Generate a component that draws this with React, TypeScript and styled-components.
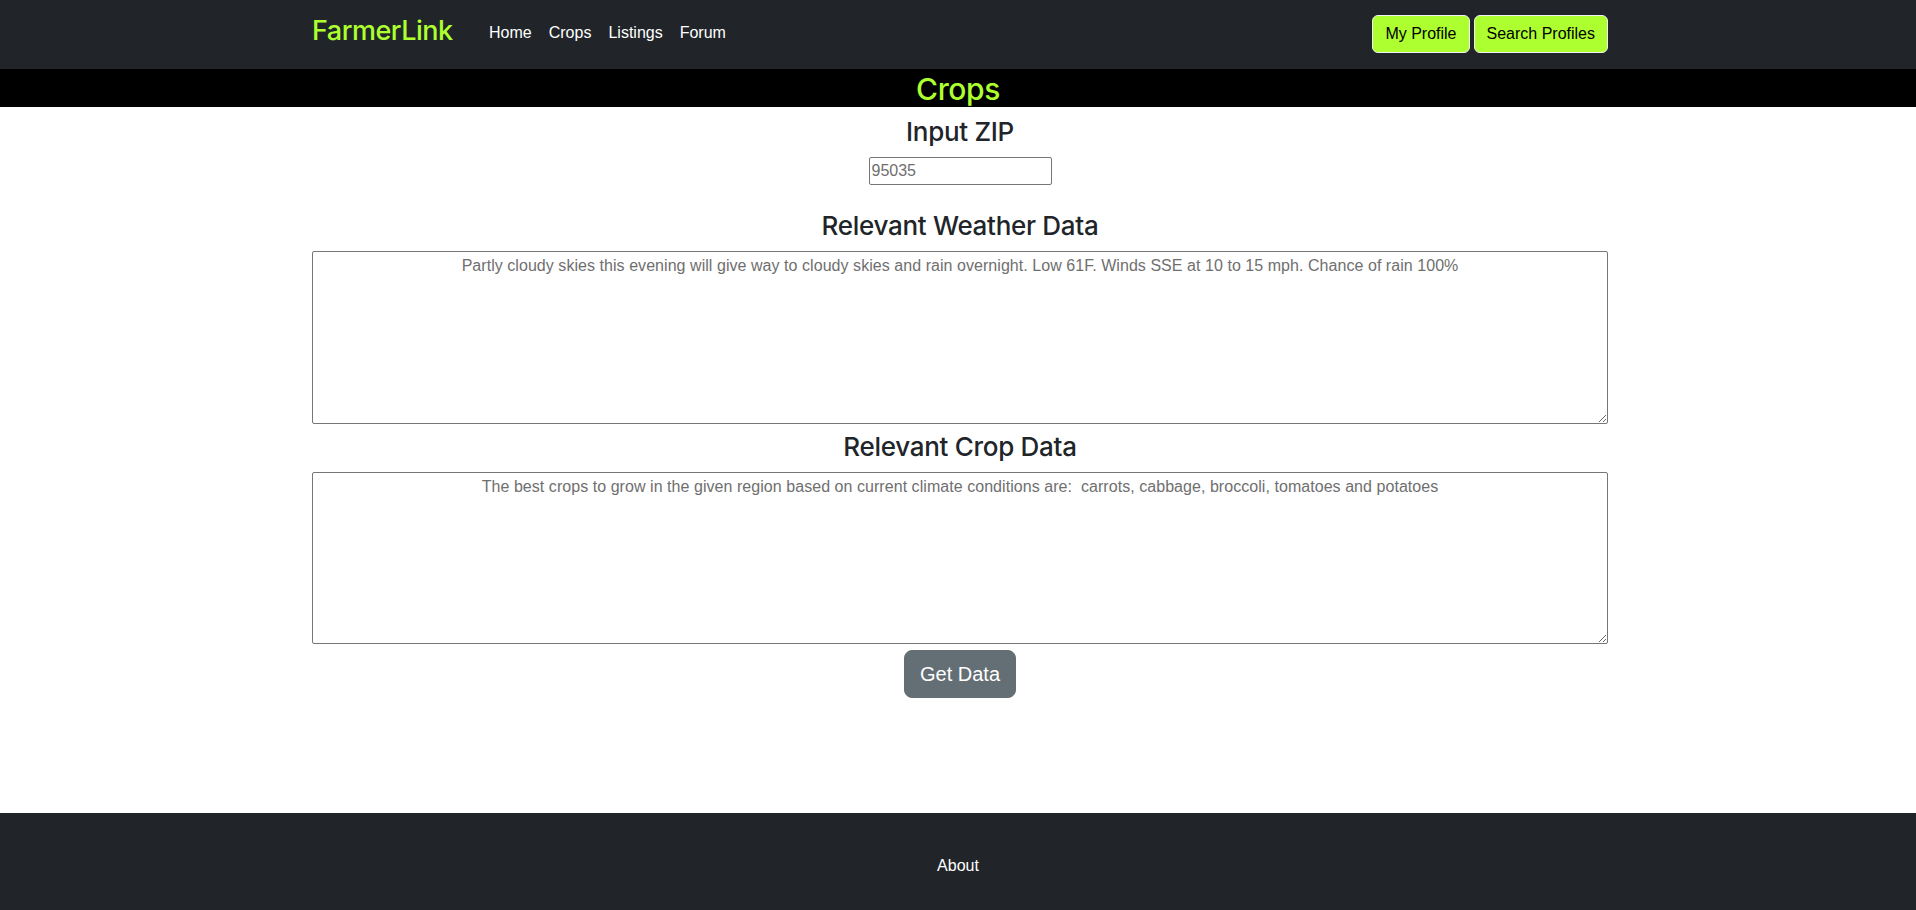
import React from "react";
import styled, { createGlobalStyle } from "styled-components";

const GREEN = "#adff2f";
const DARK = "#212529";

const GlobalStyle = createGlobalStyle`
  html, body { margin: 0; padding: 0; }
  body {
    font-family: "Liberation Sans", Arial, sans-serif;
    font-size: 16px;
    line-height: 1.5;
    color: #212529;
    background: #fff;
  }
  * { box-sizing: border-box; }
`;

const Page = styled.div`
  display: flex;
  flex-direction: column;
  min-height: 100vh;
`;

const NavBar = styled.nav`
  background: ${DARK};
  height: 69px;
`;

const NavInner = styled.div`
  width: 1300px;
  height: 100%;
  margin: 0 auto;
  padding-left: 4px;
  display: flex;
  align-items: center;
`;

const Brand = styled.a`
  font-family: "Inter", "Liberation Sans", sans-serif;
  font-size: 27px;
  font-weight: 500;
  letter-spacing: -0.5px;
  color: ${GREEN};
  text-decoration: none;
  margin-right: 28px;
  margin-top: -6px;
`;

const NavList = styled.ul`
  display: flex;
  list-style: none;
  margin: 0;
  padding: 0;
`;

const NavLink = styled.a`
  display: block;
  padding: 6px 8.5px 10px;
  color: #fff;
  text-decoration: none;
  font-size: 16px;
`;

const NavActions = styled.div`
  margin-left: auto;
  margin-top: -2px;
  display: flex;
  gap: 4px;
`;

const ProfileButton = styled.button`
  background: ${GREEN};
  color: #000;
  border: 1px solid #f1f1f1;
  border-radius: 6px;
  padding: 6px 12px;
  font-family: inherit;
  font-size: 16px;
  line-height: 24px;
  cursor: pointer;
`;

const PageTitle = styled.h2`
  margin: 0;
  background: #000;
  color: ${GREEN};
  font-family: "Inter", "Liberation Sans", sans-serif;
  font-size: 30px;
  font-weight: 500;
  line-height: 40px;
  height: 38px;
  letter-spacing: -0.4px;
  text-align: center;
`;

const Main = styled.main`
  width: 1300px;
  margin: 0 auto;
  padding-left: 4px;
  display: flex;
  flex-direction: column;
  align-items: center;
`;

const SectionHeading = styled.h3<{ $top?: number }>`
  margin: ${(p) => p.$top ?? 0}px 0 8px;
  font-family: "Inter", "Liberation Sans", sans-serif;
  font-size: 26px;
  font-weight: 500;
  letter-spacing: -0.3px;
  line-height: 34px;
  color: #212529;
`;

const ZipInput = styled.input`
  width: 183px;
  height: 28px;
  margin-bottom: 24px;
  padding: 1px 2px;
  border: 1px solid #767676;
  border-radius: 2px;
  font-family: inherit;
  font-size: 16px;
  color: #6f6f6f;
`;

const DataArea = styled.textarea<{ $h: number }>`
  display: block;
  width: 100%;
  height: ${(p) => p.$h}px;
  margin-bottom: 6px;
  padding: 2px;
  border: 1px solid #767676;
  border-radius: 2px;
  font-family: inherit;
  font-size: 16px;
  line-height: 24px;
  letter-spacing: 0.05px;
  color: #6f6f6f;
  text-align: center;
`;

const GetDataButton = styled.button`
  width: 112px;
  height: 48px;
  background: #646e75;
  color: #fff;
  border: 1px solid #646e75;
  border-radius: 8px;
  font-family: inherit;
  font-size: 20px;
  line-height: 30px;
  cursor: pointer;
`;

const Footer = styled.footer`
  margin-top: auto;
  background: ${DARK};
  height: 97px;
  padding-top: 41px;
  text-align: center;
`;

const FooterLink = styled.a`
  color: #fff;
  text-decoration: none;
  font-size: 16px;
  line-height: 24px;
`;

export default function App() {
  return (
    <Page>
      <GlobalStyle />
      <NavBar>
        <NavInner>
          <Brand href="#">FarmerLink</Brand>
          <NavList>
            <li><NavLink href="#">Home</NavLink></li>
            <li><NavLink href="#">Crops</NavLink></li>
            <li><NavLink href="#">Listings</NavLink></li>
            <li><NavLink href="#">Forum</NavLink></li>
          </NavList>
          <NavActions>
            <ProfileButton>My Profile</ProfileButton>
            <ProfileButton>Search Profiles</ProfileButton>
          </NavActions>
        </NavInner>
      </NavBar>
      <PageTitle>Crops</PageTitle>
      <Main>
        <SectionHeading $top={8}>Input ZIP</SectionHeading>
        <ZipInput type="text" defaultValue="95035" />
        <SectionHeading>Relevant Weather Data</SectionHeading>
        <DataArea
          $h={173}
          readOnly
          defaultValue="Partly cloudy skies this evening will give way to cloudy skies and rain overnight. Low 61F. Winds SSE at 10 to 15 mph. Chance of rain 100%"
        />
        <SectionHeading>Relevant Crop Data</SectionHeading>
        <DataArea
          $h={172}
          readOnly
          defaultValue="The best crops to grow in the given region based on current climate conditions are:  carrots, cabbage, broccoli, tomatoes and potatoes"
        />
        <GetDataButton>Get Data</GetDataButton>
      </Main>
      <Footer>
        <FooterLink href="#">About</FooterLink>
      </Footer>
    </Page>
  );
}
